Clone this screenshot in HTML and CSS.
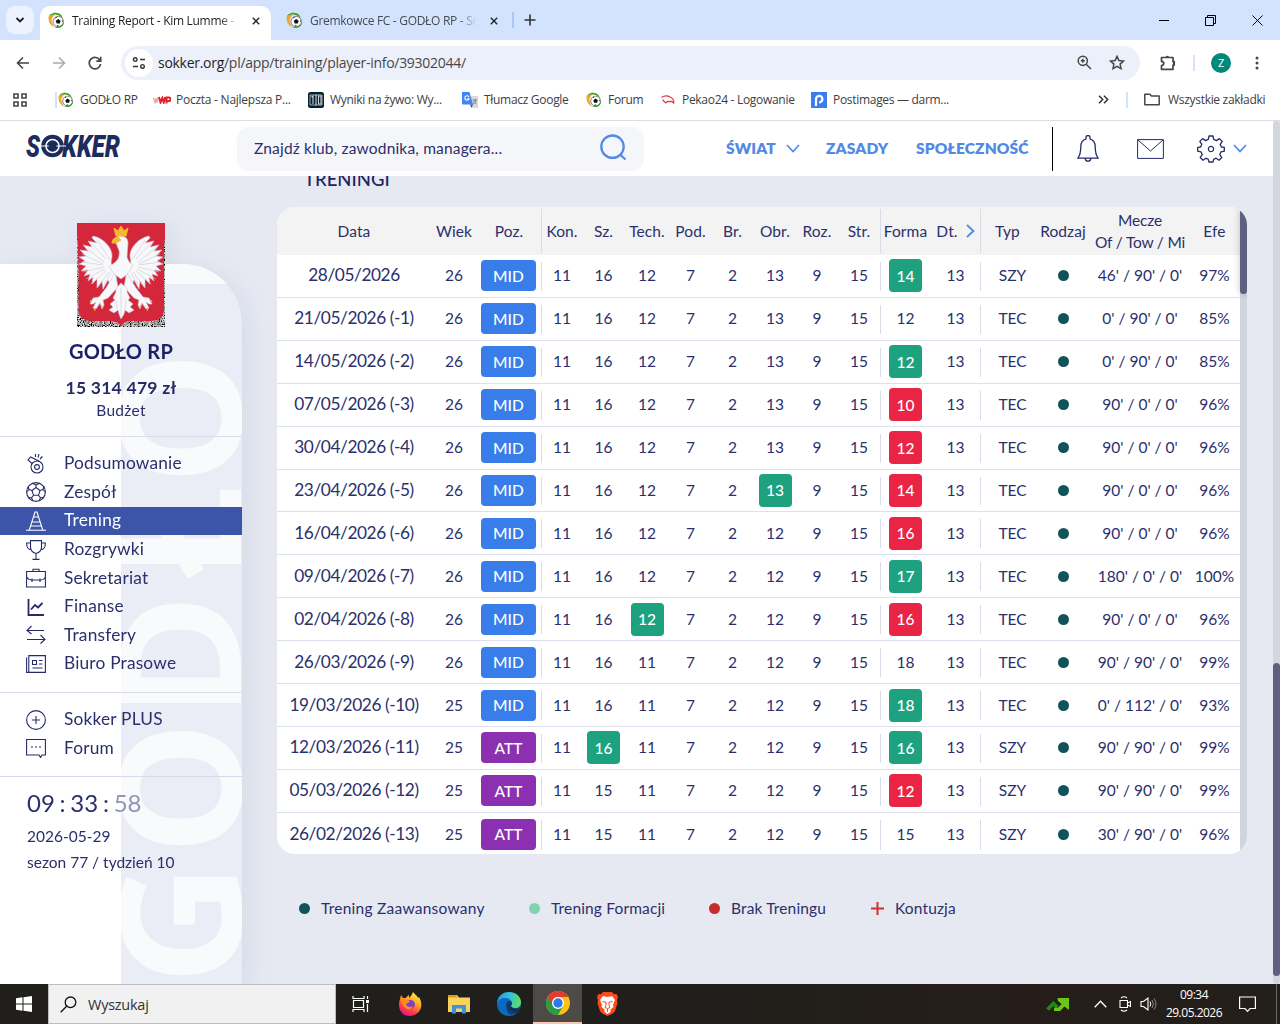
FILE: index.html
```html
<!DOCTYPE html>
<html lang="pl">
<head>
<meta charset="utf-8">
<title>Training Report - Kim Lumme - Sokker</title>
<link rel="stylesheet" href="styles.css">
</head>
<body>
<svg class="defs" width="0" height="0">
  <symbol id="ball" viewBox="0 0 16 16">
    <circle cx="9.6" cy="9" r="4.9" fill="#fff" stroke="#777" stroke-width=".9"/>
    <path d="M9.6 6.6l2.3 1.6-.8 2.6H8.2l-.9-2.6z" fill="#111"/>
    <path d="M7 4.8l1.6.2L7.2 6zM13.8 7.2l.3 2.4-1-.8zM8 13.2l2.5.3-1.2-1.2z" fill="#222"/>
    <path d="M8.500.9C4 .2.8 2.500.6 6c1.200-2.500 3.700-3.800 7-3.500 3 .3 5 1.700 6.200 4C13.600 3 11.500 1.300 8.500.9z" fill="#36a32e"/>
    <path d="M.8 4.500C-.2 9 2.200 12.800 6.500 14.500 3.800 11.500 2.700 8.500 4 5.500c.8-1.700 2-2.500 3.500-3C4.500 2 2 3 .8 4.500z" fill="#f5a623"/>
    <path d="M6 14.300c4.300 2 8.800-.3 9.300-4.800-1.800 3.200-4.800 4.700-9.300 4.800z" fill="#2f9a2c"/>
  </symbol>
  <symbol id="chev" viewBox="0 0 14 9"><path d="M1 1l6 6.500L13 1" fill="none" stroke="currentColor" stroke-width="1.700"/></symbol>
  <symbol id="cross" viewBox="0 0 10 10"><path d="M1 1l8 8M9 1L1 9" fill="none" stroke="currentColor" stroke-width="1.700"/></symbol>
</svg>

<div class="tabs">
  <div class="tab-search"><svg width="10" height="8" viewBox="0 0 10 8"><path d="M1.500 2L5 5.500 8.500 2" fill="none" stroke="#1f1f1f" stroke-width="1.800"/></svg></div>
  <div class="tab active"><svg width="17" height="17"><use href="#ball"/></svg><span class="tab-title">Training Report - Kim Lumme - S</span><svg class="x" width="8" height="8"><use href="#cross"/></svg></div>
  <div class="tab idle"><svg width="17" height="17"><use href="#ball"/></svg><span class="tab-title">Gremkowce FC - GODŁO RP - So</span><svg class="x" width="8" height="8"><use href="#cross"/></svg></div>
  <i class="tab-sep"></i>
  <svg class="plus" width="12" height="12" viewBox="0 0 12 12"><path d="M6 .5v11M.5 6h11" stroke="#333" stroke-width="1.600"/></svg>
  <div class="win">
    <svg width="10" height="10"><path d="M0 5.500h10" stroke="#000"/></svg>
    <svg width="11" height="11"><path d="M.5 2.500h8v8h-8zM2.500 2.500v-2h8v8h-2" fill="none" stroke="#000"/></svg>
    <svg width="11" height="11"><path d="M.5.5l10 10M10.500.5l-10 10" stroke="#000"/></svg>
  </div>
</div>

<div class="toolbar">
  <svg class="ic-back" width="14" height="14" viewBox="0 0 14 14"><path d="M13 7H2M7 1.500L1.500 7 7 12.500" fill="none" stroke="#444746" stroke-width="1.600"/></svg>
  <svg class="ic-fwd" width="14" height="14" viewBox="0 0 14 14"><path d="M1 7h11M7 1.500L12.500 7 7 12.500" fill="none" stroke="#a9abac" stroke-width="1.600"/></svg>
  <svg class="ic-reload" width="14" height="14" viewBox="0 0 14 14"><path d="M12 4.500A5.700 5.700 0 1 0 12.600 8M12.700.8v4.400H8.300" fill="none" stroke="#444746" stroke-width="1.700"/></svg>
  <div class="omni">
    <span class="site"><svg width="14" height="12" viewBox="0 0 14 12"><path d="M8 2.500h5M1 9.500h5" stroke="#333" stroke-width="1.500"/><circle cx="3.200" cy="2.600" r="1.800" fill="none" stroke="#333" stroke-width="1.400"/><circle cx="10.500" cy="9.400" r="1.800" fill="none" stroke="#333" stroke-width="1.400"/></svg></span>
    <span class="url"><b>sokker.org</b>/pl/app/training/player-info/39302044/</span>
    <svg class="ic-zoom" width="15" height="15" viewBox="0 0 15 15"><circle cx="5.800" cy="5.800" r="4.600" fill="none" stroke="#444746" stroke-width="1.500"/><path d="M9.200 9.200l4.800 4.800M5.800 3.800v4M3.800 5.800h4" stroke="#444746" stroke-width="1.500"/></svg>
    <svg class="ic-star" width="16" height="15" viewBox="0 0 16 15"><path d="M8 1.300l1.900 4.200 4.600.5-3.400 3.100.9 4.500L8 11.300l-4 2.300.9-4.500L1.500 6l4.600-.5z" fill="none" stroke="#444746" stroke-width="1.500"/></svg>
  </div>
  <svg class="ic-ext" width="17" height="17" viewBox="0 0 17 17"><path d="M1.500 3.500H13v4.200h1.200v3.400H13v4.200H1.500v-3.800c3-.5 3-3.700 0-4.200z" fill="none" stroke="#444746" stroke-width="1.700" stroke-linejoin="round"/><path d="M5.500 3.500a1.800 1.800 0 0 1 3.600 0zM13 7.500a1.900 1.900 0 0 1 0 3.800z" fill="#444746"/></svg>
  <i class="bar-sep"></i>
  <span class="avatar">Z</span>
  <svg class="ic-dots" width="4" height="14"><circle cx="2" cy="2" r="1.500" fill="#444746"/><circle cx="2" cy="7" r="1.500" fill="#444746"/><circle cx="2" cy="12" r="1.500" fill="#444746"/></svg>
</div>

<div class="bookmarks">
  <svg class="ic-apps" width="14" height="14" viewBox="0 0 14 14"><path d="M1 1h4v4H1zM9 1h4v4H9zM1 9h4v4H1zM9 9h4v4H9z" fill="none" stroke="#444746" stroke-width="1.600"/></svg>
  <i class="bar-sep first-sep"></i>
  <div class="bm-list">
    <span class="bm"><svg width="16" height="16"><use href="#ball"/></svg>GODŁO RP</span>
    <span class="bm wide"><svg width="18" height="8" viewBox="0 0 18 8"><path d="M.5 1.500l1.500 5 1-4 1 4 1-5" fill="none" stroke="#f3a0a4" stroke-width="1.300"/><path d="M6 1l1.500 5.500L9.300 2l1.400 4.500L12.300 1M13.500 7.500V1.500h2.300a1.600 1.600 0 0 1 0 3.500h-2" fill="none" stroke="#e4202a" stroke-width="2"/></svg>Poczta - Najlepsza P...</span>
    <span class="bm"><svg width="16" height="16" viewBox="0 0 16 16"><rect width="16" height="16" rx="2.500" fill="#06202b"/><path d="M3.500 5l1.500-1v8M8 2.500v11M10.500 4h2.500v8h-2.500z" fill="none" stroke="#cdd6da" stroke-width="1.100"/><path d="M2 3h12v10H2z" fill="none" stroke="#cdd6da" stroke-width=".8"/></svg>Wyniki na żywo: Wy...</span>
    <span class="bm"><svg width="16" height="16" viewBox="0 0 16 16"><path d="M7 4h9v12H9.500z" fill="#d8d9db"/><path d="M0 0h7.500l3.500 12.500H1a1 1 0 0 1-1-1z" fill="#4285f4"/><path d="M8 12.500h3L9.500 16z" fill="#2a56c6"/><path d="M7 5a2.200 2.200 0 1 0 .1 1.700H5" fill="none" stroke="#fff" stroke-width="1.100"/><path d="M10.500 8h4.500M12.700 7v1M11 12c2-1 3-2.500 3-4M11.500 9c.5 1.500 2 2.500 3 3" fill="none" stroke="#777" stroke-width=".9"/></svg>Tłumacz Google</span>
    <span class="bm"><svg width="16" height="16"><use href="#ball"/></svg>Forum</span>
    <span class="bm"><svg width="16" height="16" viewBox="0 0 16 16"><path d="M1.500 5.500C4 3.800 8 3.800 10.500 5.200c2 .6 2.800 1.800 3.200 3.800v2l-2-1.700-4.500.4-1.500 1.300L4 9.200 2.500 7.800" fill="none" stroke="#dc3640" stroke-width="1.200"/></svg>Pekao24 - Logowanie</span>
    <span class="bm"><svg width="16" height="16" viewBox="0 0 16 16"><rect width="16" height="16" fill="#3b7ded"/><path d="M5 14V7a3.200 3.200 0 1 1 3.200 3.300" fill="none" stroke="#fff" stroke-width="2.200"/></svg>Postimages — darm...</span>
  </div>
  <svg class="ic-more" width="11" height="9" viewBox="0 0 11 9"><path d="M1 .8l3.700 3.700L1 8.200M6 .8l3.700 3.700L6 8.200" fill="none" stroke="#333" stroke-width="1.500"/></svg>
  <i class="bar-sep"></i>
  <svg class="ic-folder" width="16" height="13" viewBox="0 0 16 13"><path d="M.8 11.800V1.200h5l1.700 1.900h7.700v8.700z" fill="none" stroke="#444746" stroke-width="1.500" stroke-linejoin="round"/></svg>
  <span class="all">Wszystkie zakładki</span>
</div>

<div class="page">
  <header class="topbar">
    <svg class="logo" width="98" height="26" viewBox="0 0 98 26">
      <g class="logo-text">
        <text x="1" y="24" textLength="14" lengthAdjust="spacingAndGlyphs">S</text>
        <text x="37" y="24" textLength="58" lengthAdjust="spacingAndGlyphs">KKER</text>
      </g>
      <circle cx="27.500" cy="13" r="9.300" fill="none" stroke="#1c2c5e" stroke-width="4"/>
      <circle cx="27.500" cy="13" r="5.800" fill="#1c2c5e"/>
      <path d="M15 13h26" stroke="#fff" stroke-width="1"/><ellipse cx="27.500" cy="13" rx="4" ry="1.700" fill="#1c2c5e"/>
    </svg>
    <div class="search"><span>Znajdź klub, zawodnika, managera...</span><svg width="27" height="27" viewBox="0 0 27 27"><circle cx="12.500" cy="12.700" r="11.200" fill="none" stroke="#5389e5" stroke-width="2.300"/><path d="M20 20.500l5.500 5" stroke="#5389e5" stroke-width="2.300"/></svg></div>
    <nav>
      <a class="n1">ŚWIAT</a><svg class="n-chev" width="14" height="9"><use href="#chev"/></svg><a class="n2">ZASADY</a><a class="n3">SPOŁECZNOŚĆ</a>
    </nav>
    <div class="tools">
      <svg width="22" height="28" viewBox="0 0 22 28"><path d="M9 4V2.500a2 2 0 0 1 4 0V4c3.500 1 5.200 4 5.200 7.500 0 5 .3 8.500 3 11.700H.8c2.700-3.200 3-6.700 3-11.700C3.800 8 5.500 5 9 4zM8.300 23.500a2.700 2.700 0 0 0 5.400 0" fill="none" stroke="#262b68" stroke-width="1.300"/></svg>
      <svg width="27" height="20" viewBox="0 0 27 20"><path d="M.6.600h25.800v18.800H.6zM1 1l12.500 11L26 1" fill="none" stroke="#262b68" stroke-width="1"/></svg>
      <svg width="28" height="28" viewBox="-14 -14 28 28"><path fill="none" stroke="#262b68" stroke-width="1.300" stroke-linejoin="round" d="M-2-13h4l.7 3.400 2.800 1.200 2.900-2 2.800 2.800-2 2.900L10.400-2l2.900.3v3.900l-3.300.6-1.200 2.800 2 2.900L8 11.200l-2.900-2L2.700 10.300 2 13h-4l-.7-2.700-2.400-1.100-2.900 2L-10.800 8.500l2-2.900L-10 2.800l-3.300-.6v-3.900l2.900-.3 1.200-2.700-2-2.900 2.800-2.800 2.900 2 2.800-1.200z"/><circle r="2.600" fill="none" stroke="#262b68" stroke-width="1.300"/></svg>
      <svg class="t-chev" width="14" height="9"><use href="#chev"/></svg>
    </div>
  </header>

  <div class="body">
    <aside>
      <svg class="crest" width="88" height="104" viewBox="0 0 88 104">
        <filter id="grain" x="0" y="0" width="100%" height="100%"><feTurbulence type="fractalNoise" baseFrequency="1.100" numOctaves="1" seed="4"/><feColorMatrix values="0 0 2.600 0 -.95  0 0 2.600 0 -.95  0 0 2.600 0 -.95  0 0 0 0 1"/></filter>
        <rect width="88" height="104" filter="url(#grain)"/>
        <path d="M0 0h88v14c-1.500 8-1 20-1 34v38q0 12-13 12H53q-7 0-9 6-2-6-9-6H15Q1.500 98 1.500 86V48Q1.500 25 0 12z" fill="#d5273c"/>
        <g fill="#f8f8fa" stroke="#c9c8d4" stroke-width=".6" stroke-linejoin="round">
          <g id="wing">
            <path d="M38 43C33 44 34 38 35 34c1-8-8-19-19-21l-1 2 5 5-9-2 4 6-9-2 5 6-8-1 6 6-7 1 6 4-6 3 7 2-5 5 7-1-4 6 6-2-2 7 5-4-1 7 5-5v9l5-7 1 8 5-9 3 7 3-9 3 6z"/>
            <path d="M14 20l15 16M8 24l19 15M5 31l21 10M5 39l21 3M6 49l21-5M9 56l19-10M14 61l15-13M21 64l11-15M27 62l7-12M20 17l13 20" fill="none"/>
            <path d="M38 50l-9 15-7 9-6 1-3 6 3 0 3-2-3 6 3 1 4-6 2 6 2-4-1-5 5-2 10-11z"/>
          </g>
          <use href="#wing" transform="matrix(-1 0 0 1 88 0)"/>
          <path d="M36 18q4-6 9-5 6 1 6 7l-1 14q1 5 6 8-3 7-8 11l-4 3-4-3q-6-4-8-10 9-4 10-10 1-5-1-8l-2-5z"/>
          <path d="M44 60c-3 4-6 5-5 9l-3 6 2 2-5 4 3 3-4 3 5 3 4-3 1 4 2 5 3-5 1-4 4 3 5-3-4-3 3-3-5-4 2-2-3-6c1-4-2-5-6-9z"/>
          <path d="M44 65v27M39 77q0 8 2 9M49 77q0 8-2 9" fill="none"/>
        </g>
        <path d="M35 20q0-5 6-6l3 3-5 3zM39 13L37 5l4 3 3-5 3 5 4-3-2 8zM17 85l1 3M24 82l2 3M14 77l-1 2M71 85l-1 3M64 82l-2 3M74 77l1 2" fill="#f5b82f" stroke="#f5b82f" stroke-width="1"/>
      </svg>
      <div class="card">
        <svg class="mark" width="121" height="720" viewBox="0 0 121 720" aria-hidden="true">
          <text transform="translate(120 720) rotate(-90)" x="-1 129 266 405 499 650 685">GODŁO R</text>
        </svg>
        <div class="club">GODŁO RP</div>
        <div class="money">15 314 479 zł</div>
        <div class="budget">Budżet</div>
        <ul class="menu first">
          <li><svg viewBox="0 0 20 20"><circle cx="11" cy="13" r="6"/><circle cx="11" cy="13" r="2.400"/><path d="M6 9.500L2 6l2.500-3 9 4.300M9.500 0v3M13 0l-1 3.500M16.500 2.500L14 5"/></svg>Podsumowanie</li>
          <li><svg viewBox="0 0 20 20"><circle cx="10" cy="10" r="9.400"/><path d="M10 5.500l4 3-1.500 4.800h-5L6 8.500zM10 5.500V3L6.500 1.300M10 3l3.500-1.700M14 8.500l3-1 1-3.500M17 7.500l2.300 2.500M12.500 13.300l2 2.500 3-.2M14.500 15.800L13 19M7.500 13.300l-2 2.500-3-.2M5.500 15.800L7 19M6 8.500l-3-1-1-3M3 7.500L.7 10"/></svg>Zespół</li>
          <li class="on"><svg viewBox="0 0 20 20"><path d="M0 19.300h20M3.300 19L9 1h2l5.700 18M7.500 6h5M6 11h8M4.800 15h10.500"/></svg>Trening</li>
          <li><svg viewBox="0 0 20 20"><path d="M4.500.600h11V7c0 3.500-2 5.500-5.500 6.500C6.500 12.500 4.500 10.500 4.500 7zM4.500 3H.6c0 5 1.500 6.500 5 7M15.500 3h3.900c0 5-1.500 6.500-5 7M10 13.500v5.800M6.500 19.400h7"/></svg>Rozgrywki</li>
          <li><svg viewBox="0 0 20 20"><path d="M.6 3.500h18.800v15.500H.6zM7 3.500V1.200h6v2.300M.6 9c2 3 3 3 5 3h9c2 0 3 0 4.800-3M6 10.500v3.500M14 10.500v3.500"/></svg>Sekretariat</li>
          <li><svg viewBox="0 0 20 20"><path class="thick" d="M2.500 2v16H18M5 12.500l4-4.500 3 2.500L16.500 6"/></svg>Finanse</li>
          <li><svg viewBox="0 0 20 20"><path d="M18 5.500H1M5.500 1L1 5.500 5.500 9M1 14.500h18M14.500 10l4.500 4.500-4.500 4"/></svg>Transfery</li>
          <li><svg viewBox="0 0 20 20"><path d="M2.800 1.600h16.600v16.800H2.800zM.6 3.500v14.900h2.200M6.500 6.500h4v4h-4zM13 6.500h3.500M13 10h3.500M6.500 14h10"/></svg>Biuro Prasowe</li>
        </ul>
        <ul class="menu second">
          <li><svg viewBox="0 0 20 20"><circle cx="10" cy="10" r="9.400"/><path d="M10 6v8M6 10h8"/></svg>Sokker PLUS</li>
          <li><svg viewBox="0 0 20 20"><path d="M.6 1.500h18.800v15.500H16l-1.500 2.500L13 17H.6zM5 9h2M9 9h2M13 9h2"/></svg>Forum</li>
        </ul>
        <div class="clock"><span>09</span><i>:</i><span>33</span><i>:</i><span class="sec">58</span></div>
        <div class="date">2026-05-29</div>
        <div class="season">sezon 77 / tydzień 10</div>
      </div>
    </aside>
    <main>
      <h2>TRENINGI</h2>
      <div class="panel">
        <div class="table" id="table">
          <div class="row head">
            <span>Data</span><span>Wiek</span><span>Poz.</span><span class="line">Kon.</span><span>Sz.</span><span>Tech.</span><span>Pod.</span><span>Br.</span><span>Obr.</span><span>Roz.</span><span>Str.</span><span class="line">Forma</span><span>Dt.<svg class="next" width="9" height="14" viewBox="0 0 9 14"><path d="M1 1l6.500 6L1 13" fill="none" stroke="#5389e5" stroke-width="1.800"/></svg></span><span class="line">Typ</span><span>Rodzaj</span><span class="mins">Mecze<br>Of / Tow / Mi</span><span>Efe</span>
          </div>
        </div>
        <div class="scroll"><i></i></div>
      </div>
      <div class="legend">
        <span class="l1"><i class="dot adv"></i>Trening Zaawansowany</span>
        <span class="l2"><i class="dot form"></i>Trening Formacji</span>
        <span class="l3"><i class="dot none"></i>Brak Treningu</span>
        <span class="l4"><svg width="13" height="13"><path d="M6.500 0v13M0 6.500h13" stroke="#d0302f" stroke-width="2"/></svg>Kontuzja</span>
      </div>
    </main>
  </div>
  <div class="page-scroll"><i></i></div>
</div>

<div class="taskbar">
  <span class="start"><svg width="16" height="16" viewBox="0 0 16 16"><path d="M0 2.200L6.500 1.300v6.200H0zM7.500 1.200L16 0v7.500H7.500zM0 8.500h6.500v6.200L0 13.800zM7.500 8.500H16V16l-8.500-1.200z" fill="#fff"/></svg></span>
  <div class="find"><svg width="17" height="17" viewBox="0 0 17 17"><circle cx="10.500" cy="6.300" r="5.300" fill="none" stroke="#111" stroke-width="1.300"/><path d="M6.800 10L.7 16.300" stroke="#111" stroke-width="1.300"/></svg>Wyszukaj</div>
  <span class="app"><svg width="18" height="16" viewBox="0 0 18 16"><path d="M1 0v2.500h11V0M1 16v-2.500h11V16M1.500 4.500h10v7h-10zM15.500 0v3M15.500 8v8" fill="none" stroke="#fff" stroke-width="1.200"/><path d="M14 4h3v3h-3z" fill="#fff"/></svg></span>
  <span class="app"><svg width="24" height="24" viewBox="0 0 24 24"><defs><linearGradient id="ff" x1=".8" y1="0" x2=".3" y2="1"><stop offset="0" stop-color="#fff44f"/><stop offset=".45" stop-color="#ff9a1f"/><stop offset=".75" stop-color="#ff3750"/><stop offset="1" stop-color="#e31587"/></linearGradient></defs><path d="M15 0c1 2 4 3 5 6l1-1c5 8 2 18-9 19C3 24-1 16 2 7l1-4 2 3 3 0c1-2 2-2 3-3l0 3c1-1 3-3 4-6z" fill="url(#ff)"/><circle cx="12.300" cy="12.500" r="4.600" fill="#7a3fd0"/><path d="M4 8c3-2 5 0 8 1-1 2-3 2-4 3 1 3 4 4 7 2-2 6-11 4-11-6z" fill="#ff8a1c"/></svg></span>
  <span class="app"><svg width="22" height="20" viewBox="0 0 22 20"><path d="M0 1h9l2 2.500h11V18H0z" fill="#fbd25a"/><path d="M0 1h8l1.500 2.500H0z" fill="#d99a1a"/><path d="M4 19.500V11h14v8.500h-4v-5H8v5z" fill="#3c94dd"/></svg></span>
  <span class="app"><svg width="24" height="24" viewBox="0 0 24 24"><defs><linearGradient id="eg" x1="0" y1=".3" x2="1" y2=".5"><stop offset="0" stop-color="#1a9de0"/><stop offset=".5" stop-color="#35c1d9"/><stop offset="1" stop-color="#5fe05a"/></linearGradient></defs><circle cx="12" cy="12" r="12" fill="#0b6ac0"/><path d="M0 11C1 3 7 0 12 0c8 0 12 6 12 10s-3 6-6 6c-2 0-4-1-4-2s1-1 1-3c0-3-3-5-7-5s-7 2-8 5z" fill="url(#eg)"/><path d="M9 13c0-2 1-3 2-4 3 0 4 1 4 2.500 0 1-1 1.500-1 2.500 0 1 2 2.500 5 2.500 2 0 3-.8 4-1.500-2 5-6 8-9 7.500-3-.8-5-4.500-5-9.500z" fill="#0f3d72"/><path d="M14 14.500c0 1.500 2 2.500 5 2.500 2 0 4-1 5-2v5l-4 2-8-6z" fill="#22211d" opacity=".55"/></svg></span>
  <span class="app current"><svg width="24" height="24" viewBox="0 0 24 24"><circle cx="12" cy="12" r="12" fill="#fbc116"/><path d="M1.600 6A12 12 0 0 0 12 24l5.200-9L12 12z" fill="#2a9c48"/><path d="M1.600 6A12 12 0 0 1 22.400 6H12a6 6 0 0 0-5.200 9z" fill="#e33b2e"/><circle cx="12" cy="12" r="6" fill="#fff"/><circle cx="12" cy="12" r="4.700" fill="#3277e8"/></svg></span>
  <span class="app"><svg width="21" height="24" viewBox="0 0 21 24"><path d="M6 0h9l2 2.200 2.500-.2L21 5l-1 3 .5 3-2.500 8c-1 2-5 4-7.500 5C8 23 4 21 3 19L.5 11 1 8 0 5l1.500-3L4 2.200z" fill="#fb4a1c"/><path d="M6 4l4.500 1L15 4l3 4-2 5 .5 2-3 2.500 0 2.500-3 2-3-2 0-2.500-3-2.500.5-2L3 8z" fill="#fff"/><path d="M5.500 9.500l3.500.8M15.500 9.500l-3.500.8M9 10v3l-1 2.500 2.500 1 2.500-1-1-2.500v-3M10.500 17v3" fill="none" stroke="#fb4a1c" stroke-width="1"/></svg></span>
  <div class="tray">
    <svg class="y1" width="23" height="13" viewBox="0 0 23 13"><path d="M1.500 11.500l6-6 4 4" fill="none" stroke="#24861d" stroke-width="3.600"/><path d="M8 11.500l4.500.5L20 4" fill="none" stroke="#6cc516" stroke-width="3.800"/><path d="M11.500 0H23v12l-4-3-7-6z" fill="#6cc516"/></svg>
    <svg class="y2" width="13" height="8" viewBox="0 0 13 8"><path d="M.7 7.200l5.800-6 5.800 6" fill="none" stroke="#fff" stroke-width="1.300"/></svg>
    <svg class="y3" width="12" height="16" viewBox="0 0 12 16"><path d="M1 4.500h7.500v7H1zM8.500 7l3-1.500v5l-3-1.500M2 2q3-2.500 6 0M2 14q3 2.500 6 0" fill="none" stroke="#fff" stroke-width="1.100"/></svg>
    <svg class="y4" width="17" height="14" viewBox="0 0 17 14"><path d="M1 4.500h2.500L8 1v12L3.500 9.500H1z" fill="none" stroke="#fff" stroke-width="1.100"/><path d="M10 4.500q1.600 2.500 0 5" fill="none" stroke="#fff"/><path d="M12 3q2.800 4 0 8M14 1.500q4 5.500 0 11" fill="none" stroke="#888"/></svg>
    <div class="time">09:34<br>29.05.2026</div>
    <svg class="y5" width="17" height="17" viewBox="0 0 17 17"><path d="M.6 1h15.800v11.500H11L8.500 15.300 6 12.500H.6z" fill="none" stroke="#fff" stroke-width="1.200"/></svg>
    <i class="peek"></i>
  </div>
</div>
<script src="script.js"></script>
</body>
</html>
```
FILE: styles.css
```css
* { box-sizing: border-box; }
body { margin: 0; width: 1280px; height: 1024px; overflow: hidden; font-family: Lato, "Open Sans", sans-serif; color: #2b2f6c; background: #fff; display: flex; flex-direction: column; }
svg { display: block; flex: none; }
.defs { position: absolute; }
i { font-style: normal; display: block; flex: none; }

/* browser chrome */
.tabs, .toolbar, .bookmarks { font: 12px "Open Sans", "Noto Sans", sans-serif; letter-spacing: -.3px; flex: none; display: flex; align-items: center; }
.tabs { height: 40px; background: #d3e3fd; }
.tab-search { width: 28px; height: 28px; margin-left: 6px; border-radius: 9px; background: #ecf3fe; display: flex; align-items: center; justify-content: center; }
.tab { display: flex; align-items: center; height: 34px; margin-top: 6px; padding: 0 0 5px; }
.active { width: 231px; margin-left: 6px; padding-left: 8px; border-radius: 10px 10px 0 0; background: #fff; color: #1f1f1f; }
.idle { width: 239px; padding-left: 15px; color: #454b55; }
.tab-title { width: 167px; margin-left: 7px; white-space: nowrap; overflow: hidden; -webkit-mask-image: linear-gradient(90deg, #000 148px, transparent 167px); }
.x { margin-left: 13px; color: #222; }
.tab-sep { width: 2px; height: 16px; background: #a8c7fa; margin-left: 2px; }
.plus { margin-left: 10px; }
.win { margin-left: auto; display: flex; gap: 36px; padding-right: 17px; }
.toolbar { height: 45px; }
.ic-back { margin-left: 16px; }
.ic-fwd { margin-left: 22px; }
.ic-reload { margin-left: 22px; }
.omni { width: 1019px; height: 34px; margin-left: 19px; border-radius: 17px; background: #ecf0fa; display: flex; align-items: center; padding-left: 4px; }
.site { width: 28px; height: 28px; border-radius: 50%; background: #fff; display: flex; align-items: center; justify-content: center; margin-right: 5px; }
.url { font-size: 14px; letter-spacing: -.28px; color: #474747; width: 919px; }
.url b { font-weight: 400; color: #1f1f1f; }
.ic-star { margin-left: 17px; }
.ic-ext { margin-left: 20px; }
.bar-sep { width: 2px; height: 16px; background: #d3e3fd; }
.toolbar .bar-sep { margin-left: 16px; }
.avatar { width: 20px; height: 20px; margin-left: 16px; border-radius: 50%; background: #00897b; color: #fff; display: flex; align-items: center; justify-content: center; font-size: 11px; }
.ic-dots { margin-left: 24px; }
.bookmarks { height: 36px; padding-bottom: 6px; border-bottom: 1px solid #dcdde0; color: #3c4043; }
.ic-apps { margin-left: 13px; }
.first-sep { margin-left: 28px; }
.bm-list { margin-left: 1px; width: 1040px; display: grid; grid-template-columns: 95px 155px 154px 124px 74px 151px 1fr; }
.bm { display: flex; align-items: center; gap: 6px; white-space: nowrap; }
.bm.wide { gap: 5px; letter-spacing: -.25px; }
.ic-more + .bar-sep { margin-left: 17px; }
.ic-folder { margin-left: 16px; }
.all { margin-left: 8px; white-space: nowrap; }

/* site header */
.page { height: 863px; flex: none; position: relative; background: #e6e9f2; overflow: hidden; }
.topbar { width: 1273px; height: 55px; background: #fff; display: flex; align-items: center; position: relative; z-index: 1; }
.logo { margin-left: 25px; margin-bottom: 5px; }
.logo-text { font: italic 900 32px Roboto, sans-serif; fill: #1c2c5e; }
.search { width: 407px; height: 44px; margin-left: 114px; padding: 0 17px 2px; border-radius: 12px; background: #f5f6fa; display: flex; justify-content: space-between; align-items: center; font-size: 15.5px; letter-spacing: .18px; }
nav { display: flex; align-items: center; margin-left: 82px; padding-bottom: 1px; color: #5389e5; font-weight: 800; font-size: 15.5px; width: 326px; height: 43px; border-right: 1px solid #000; box-sizing: content-box; white-space: nowrap; letter-spacing: .15px; }
.n1 { width: 60px; }
.n2 { width: 90px; margin-left: 26px; }
.tools { display: flex; align-items: center; margin-left: 24px; }
.tools svg + svg { margin-left: 38px; }
.tools svg:nth-child(3) { margin-left: 33px; }
.tools .t-chev.t-chev { margin-left: 8px; color: #5389e5; }

/* sidebar */
.body { display: flex; height: 808px; }
aside { width: 242px; flex: none; padding-top: 88px; position: relative; filter: drop-shadow(5px 5px 12px rgba(70, 85, 125, .1)); }
.crest { position: absolute; left: 77px; top: 47px; z-index: 1; }
.card { height: 720px; border-radius: 0 60px 0 0; overflow: hidden; background: linear-gradient(90deg, #fff 50%, #eaedf5 50%); position: relative; }
.mark { position: absolute; right: 0; top: 0; font: 700 168px "Open Sans", sans-serif; fill: #f9fafc; }
.card > :not(.mark) { position: relative; }
.club { margin-top: 74px; text-align: center; font-size: 20px; line-height: 26px; font-weight: 700; letter-spacing: .25px; color: #1c1f66; }
.money { margin-top: 11px; text-align: center; font-size: 17.5px; line-height: 26px; font-weight: 700; letter-spacing: .25px; color: #262a68; }
.budget { text-align: center; font-size: 15.5px; line-height: 18px; padding-bottom: 2px; letter-spacing: .3px; }
.menu { list-style: none; margin: 0; padding: 12.500px 0 0; border-top: 1px solid #d9daec; font-size: 17.3px; letter-spacing: .2px; }
.first { margin-top: 15px; height: 256px; }
.second { height: 84px; }
.menu li { display: flex; align-items: center; height: 28.6px; padding: 0 0 2px 64px; }
.menu svg { width: 20px; height: 20px; margin: 2px 18px 0 -38px; fill: none; stroke: #262b68; stroke-width: 1.100; }
.thick { stroke-width: 1.800; }
.menu .on { background: #3c55a8; color: #fff; }
.menu .on svg { stroke: #fff; }
.clock { border-top: 1px solid #d9daec; padding: 12px 0 0 27px; display: flex; font-size: 24px; line-height: 28px; }
.clock i { width: 15.500px; text-align: center; }
.clock .sec { color: #9295b5; }
.date, .season { padding-left: 27px; font-size: 15.5px; line-height: 26px; }
.date { margin-top: 6px; }

/* main panel */
main { padding-left: 35px; }
h2 { margin: -10px 0 0 27px; height: 41px; font-size: 18.5px; line-height: 26px; font-weight: 500; color: #20245f; }
.panel { width: 970px; height: 647px; display: flex; border-radius: 18px; overflow: hidden; background: #fff; }
.table { width: 963px; }
.row { display: grid; grid-template-columns: 154px 46px 64px 42px 41px 46px 41px 43px 42px 42px 42px 51px 49px 55px 56px 98px 51px; height: 42.92px; border-bottom: 1px solid #dfe0ee; align-items: stretch; font-size: 15.5px; }
.row:last-child { border-bottom: 0; }
.row > span { display: flex; align-items: center; justify-content: center; position: relative; white-space: nowrap; text-align: center; padding-bottom: 1px; }
.row > .line::before { content: ""; position: absolute; left: 0; top: 7px; bottom: 6px; width: 1px; background: #dadbe9; }
.head { height: 48px; background: #f3f3f3; border: 0; line-height: 22px; letter-spacing: .1px; }
.head > .line::before { top: 2px; bottom: 2px; }
.head > .mins { letter-spacing: -.2px; }
.next { margin-left: 8px; }
.row .day { font-size: 17.3px; letter-spacing: -.42px; padding-bottom: 2px; }
.row .typ { padding-left: 10px; }
.row b { font-weight: 500; color: #fff; border-radius: 4px; display: flex; align-items: center; justify-content: center; }
.row > .box { padding: 0 1px 0 0; }
.pos { width: 55px; height: 31px; letter-spacing: .1px; }
.mid { background: #387de9; }
.att { background: #8c30b2; }
.up, .down { width: 33px; height: 33px; margin-top: 1px; }
.up { background: #1ea17e; }
.down { background: #e92444; }
.dot { width: 11px; height: 11px; border-radius: 50%; background: #11535a; margin-top: 1px; }
.scroll { width: 7px; background: #cfd4dd; }
.scroll i { height: 87px; background: #5f6080; border-radius: 0 0 4px 4px; box-shadow: 0 0 6px rgba(60, 60, 80, .3); }
.legend { display: flex; margin: 41px 0 0 22px; font-size: 15.5px; line-height: 26px; letter-spacing: .15px; }
.legend span { display: flex; align-items: center; gap: 11px; white-space: nowrap; }
.legend .l1 { width: 230px; letter-spacing: .25px; }
.l2 { width: 180px; }
.l3 { width: 162px; }
.form { background: #82d1af; }
.none { background: #c72c2b; }
.page-scroll { position: absolute; right: 0; top: 0; width: 7px; height: 863px; background: #d1d6df; border-radius: 4px; padding-top: 542px; }
.page-scroll i { height: 313px; border-radius: 4px; background: #5f6080; }

/* taskbar */
.taskbar { height: 40px; flex: none; background: linear-gradient(90deg, #201f1b 55%, #261d19 80%, #231f1b); display: flex; align-items: stretch; color: #fff; font-family: "Open Sans", "Noto Sans", sans-serif; }
.start { width: 48px; display: flex; align-items: center; justify-content: center; }
.find { width: 288px; background: #f1f1f1; border: 1px solid #bdbdbd; color: #333; display: flex; align-items: center; gap: 11px; padding-left: 11px; font-size: 14.500px; letter-spacing: -.25px; }
.app { width: 49.300px; display: flex; align-items: center; justify-content: center; }
.current { background: #4c4b48; border-bottom: 2px solid #fcc5b0; }
.tray { margin-left: auto; display: flex; align-items: center; }
.y2 { margin-left: 25px; }
.y3 { margin-left: 12px; }
.y4 { margin-left: 9px; }
.time { width: 74px; text-align: center; font-size: 12px; line-height: 18px; letter-spacing: -.5px; }
.y5 { margin-left: 8px; }
.peek { width: 1px; height: 40px; background: #6b6864; margin: 0 3px 0 20px; }
```
FILE: script.js
```js
// columns: date, age, position, skills with form and discipline, type, minutes, efficiency
// a leading "+" or "-" marks a skill that rose or fell
const rows = [
  ["28/05/2026", 26, "MID", "11 16 12 7 2 13 9 15 +14 13", "SZY", "46' / 90' / 0'", "97%"],
  ["21/05/2026 (-1)", 26, "MID", "11 16 12 7 2 13 9 15 12 13", "TEC", "0' / 90' / 0'", "85%"],
  ["14/05/2026 (-2)", 26, "MID", "11 16 12 7 2 13 9 15 +12 13", "TEC", "0' / 90' / 0'", "85%"],
  ["07/05/2026 (-3)", 26, "MID", "11 16 12 7 2 13 9 15 -10 13", "TEC", "90' / 0' / 0'", "96%"],
  ["30/04/2026 (-4)", 26, "MID", "11 16 12 7 2 13 9 15 -12 13", "TEC", "90' / 0' / 0'", "96%"],
  ["23/04/2026 (-5)", 26, "MID", "11 16 12 7 2 +13 9 15 -14 13", "TEC", "90' / 0' / 0'", "96%"],
  ["16/04/2026 (-6)", 26, "MID", "11 16 12 7 2 12 9 15 -16 13", "TEC", "90' / 0' / 0'", "96%"],
  ["09/04/2026 (-7)", 26, "MID", "11 16 12 7 2 12 9 15 +17 13", "TEC", "180' / 0' / 0'", "100%"],
  ["02/04/2026 (-8)", 26, "MID", "11 16 +12 7 2 12 9 15 -16 13", "TEC", "90' / 0' / 0'", "96%"],
  ["26/03/2026 (-9)", 26, "MID", "11 16 11 7 2 12 9 15 18 13", "TEC", "90' / 90' / 0'", "99%"],
  ["19/03/2026 (-10)", 25, "MID", "11 16 11 7 2 12 9 15 +18 13", "TEC", "0' / 112' / 0'", "93%"],
  ["12/03/2026 (-11)", 25, "ATT", "11 +16 11 7 2 12 9 15 +16 13", "SZY", "90' / 90' / 0'", "99%"],
  ["05/03/2026 (-12)", 25, "ATT", "11 15 11 7 2 12 9 15 -12 13", "SZY", "90' / 90' / 0'", "99%"],
  ["26/02/2026 (-13)", 25, "ATT", "11 15 11 7 2 12 9 15 15 13", "SZY", "30' / 90' / 0'", "96%"]
];

const skill = (value, i) => {
  const cls = i === 0 || i === 8 ? ' class="line"' : "";
  const mark = { "+": "up", "-": "down" }[value[0]];
  return `<span${cls}>${mark ? `<b class="${mark}">${value.slice(1)}</b>` : value}</span>`;
};

document.getElementById("table").insertAdjacentHTML("beforeend", rows.map(
  ([day, age, pos, skills, type, minutes, eff]) => `<div class="row">
    <span class="day">${day}</span><span>${age}</span>
    <span class="box"><b class="pos ${pos.toLowerCase()}">${pos}</b></span>
    ${skills.split(" ").map(skill).join("")}
    <span class="typ line">${type}</span><span><i class="dot"></i></span>
    <span>${minutes}</span><span>${eff}</span></div>`).join(""));
```
